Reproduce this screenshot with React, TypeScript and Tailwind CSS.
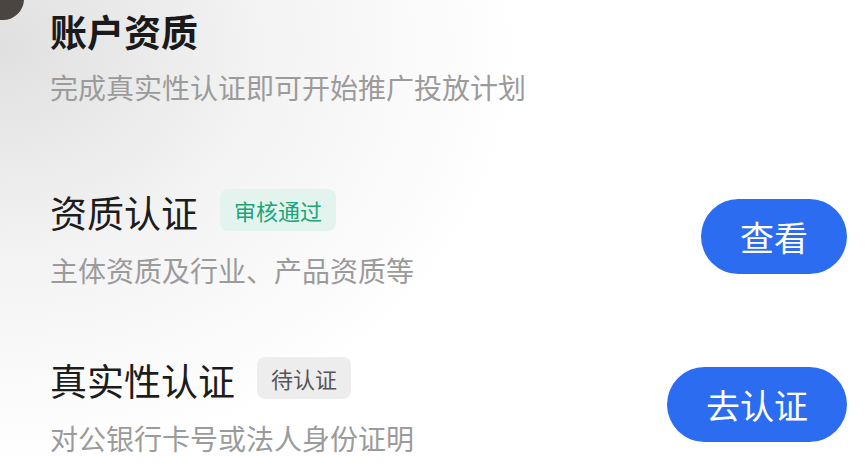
import React from "react";

type Item = {
  title: string;
  desc: string;
  badge: string;
  badgeTone: "green" | "gray";
  action: string;
};

const items: Item[] = [
  {
    title: "资质认证",
    desc: "主体资质及行业、产品资质等",
    badge: "审核通过",
    badgeTone: "green",
    action: "查看",
  },
  {
    title: "真实性认证",
    desc: "对公银行卡号或法人身份证明",
    badge: "待认证",
    badgeTone: "gray",
    action: "去认证",
  },
];

function Row({ item, top }: { item: Item; top: string }) {
  const badgeCls =
    item.badgeTone === "green"
      ? "bg-[#e3f4ee] text-[#1aa57a]"
      : "bg-[#ededed] text-[#555555]";
  return (
    <div className={`flex items-center justify-between ${top}`}>
      <div className="flex flex-col">
        <div className="flex items-center h-[42px]">
          <span className="text-[37px] leading-[42px] text-[#1c1c1c] pt-[4px]">{item.title}</span>
          <span className={`ml-[22px] h-[42px] px-[14px] rounded-[8px] flex items-center text-[22px] leading-none ${badgeCls}`}>
            {item.badge}
          </span>
        </div>
        <p className="mt-[25px] text-[28px] leading-[28px] text-[#9b9b9b]">{item.desc}</p>
      </div>
      <button className="h-[75px] px-[39px] rounded-full bg-[#2b6cf0] text-white text-[34px] leading-none">
        {item.action}
      </button>
    </div>
  );
}

export default function App() {
  return (
    <div
      className="relative w-[868px] h-[467px] overflow-hidden bg-[radial-gradient(ellipse_60%_90%_at_0%_10%,#e0e0e0_0%,#f3f3f3_50%,#ffffff_100%)]"
      style={{ fontFamily: '"Noto Sans CJK SC", "Noto Sans", sans-serif' }}
    >
      {/* avatar edge peeking from the corner */}
      <div className="absolute -left-[20px] -top-[22px] w-[44px] h-[42px] rounded-full bg-[#4a4541]" />

      <div className="pl-[50px] pr-[21px]">
        <h1 className="mt-[12px] text-[37px] leading-[38px] font-bold text-[#1a1a1a]">账户资质</h1>
        <p className="mt-[23px] text-[28px] leading-[28px] text-[#9b9b9b]">完成真实性认证即可开始推广投放计划</p>

        <Row item={items[0]} top="mt-[88px]" />
        <Row item={items[1]} top="mt-[73px]" />
      </div>
    </div>
  );
}
